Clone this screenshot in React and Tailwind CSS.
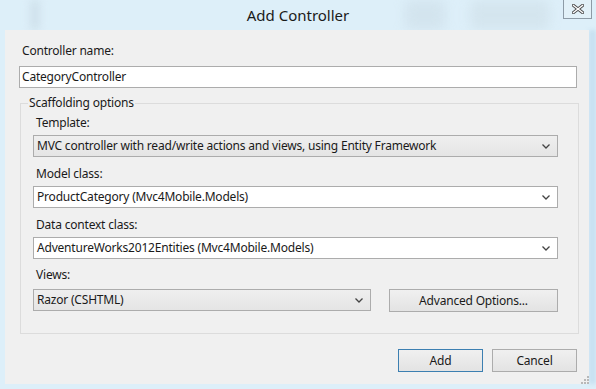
import React from 'react';

const font = { fontFamily: '"Noto Sans", "Liberation Sans", sans-serif' };

function Chevron() {
    return (
        <svg width="8" height="5" viewBox="0 0 8 5" className="shrink-0">
            <polyline points="0.5,0.5 4,4 7.5,0.5" fill="none" stroke="#444" strokeWidth="1.3" />
        </svg>
    );
}

function Select({ value, gray, className = '' }) {
    return (
        <div className={`h-[22px] flex items-center justify-between pl-[3px] pr-[7px] border border-[#acacac] ${gray ? 'bg-gradient-to-b from-[#efefef] to-[#e5e5e5]' : 'bg-white'} ${className}`}>
            <span className="text-[12px] leading-[16px] tracking-[-0.2px] text-[#1a1a1a] whitespace-nowrap">{value}</span>
            <Chevron />
        </div>
    );
}

function Label({ children }) {
    return <div className="h-[16px] text-[12px] leading-[16px] tracking-[-0.2px] text-[#1a1a1a] pl-[3px] whitespace-nowrap">{children}</div>;
}

function Button({ children, primary, className = '' }) {
    return (
        <div className={`h-[23px] flex items-center justify-center border bg-gradient-to-b from-[#f0f0f0] to-[#e3e3e3] text-[12px] tracking-[-0.2px] text-[#1a1a1a] ${primary ? 'border-[#3c7fb1]' : 'border-[#acacac]'} ${className}`}>
            {children}
        </div>
    );
}

export default function App() {
    return (
        <div className="w-[596px] h-[389px] relative overflow-hidden bg-[#ddeff9]" style={font}>
            {/* blurred background behind the glass frame */}
            <div className="absolute left-[30px] top-0 w-[10px] h-[30px] bg-[#c9dbe6] blur-[4px] opacity-70" />
            <div className="absolute left-[405px] top-0 w-[40px] h-[30px] bg-[#cfe0ea] blur-[6px] opacity-70" />
            <div className="absolute left-[470px] top-0 w-[80px] h-[30px] bg-[#cfdfe8] blur-[6px] opacity-60" />
            <div className="absolute right-0 top-[30px] w-[7px] h-[354px] bg-[#c6dff0] blur-[2px]" />

            <div className="relative h-[30px] flex items-center justify-center">
                <span className="text-[15px] text-[#1a1a1a]">Add Controller</span>
                <div className="absolute left-[563px] top-[-1px] w-[29px] h-[20px] border border-[#8d9ba6] bg-[#e6f1f7]/60 flex items-center justify-center">
                    <svg width="12" height="10" viewBox="0 0 12 10">
                        <path d="M1.5 1.5 L10.5 8.5 M10.5 1.5 L1.5 8.5" stroke="#4a4a4a" strokeWidth="3.2" strokeLinecap="square" />
                        <path d="M1.5 1.5 L10.5 8.5 M10.5 1.5 L1.5 8.5" stroke="#ffffff" strokeWidth="1.4" strokeLinecap="square" />
                    </svg>
                </div>
            </div>

            <div className="relative ml-[5px] w-[584px] h-[354px] bg-[#f0f0f0] pt-[13px] pl-[14px] pr-[12px]">
                <div className="h-[16px] text-[12px] leading-[16px] tracking-[-0.2px] text-[#1a1a1a] pl-[3px]">Controller name:</div>
                <div className="mt-[7px] h-[22px] bg-white border border-[#acacac] flex items-center pl-[2px] text-[12px] leading-[16px] tracking-[-0.2px] text-[#1a1a1a]">
                    CategoryController
                </div>

                <div className="relative mt-[15px] ml-[1px] w-[559px] border border-[#dcdcdc] pt-[11px] pl-[12px] pr-[20px] pb-[21px]">
                    <span className="absolute left-[7px] top-[-9px] px-[1px] bg-[#f0f0f0] text-[12px] leading-[16px] tracking-[-0.2px] text-[#1a1a1a]">Scaffolding options</span>

                    <Label>Template:</Label>
                    <Select className="mt-[4px]" gray value="MVC controller with read/write actions and views, using Entity Framework" />

                    <div className="mt-[9px]"><Label>Model class:</Label></div>
                    <Select className="mt-[4px]" value="ProductCategory (Mvc4Mobile.Models)" />

                    <div className="mt-[9px]"><Label>Data context class:</Label></div>
                    <Select className="mt-[4px]" value="AdventureWorks2012Entities (Mvc4Mobile.Models)" />

                    <div className="mt-[8px]"><Label>Views:</Label></div>
                    <div className="mt-[6px] flex items-start gap-[18px]">
                        <Select className="w-[338px]" gray value="Razor (CSHTML)" />
                        <Button className="w-[169px]">Advanced Options...</Button>
                    </div>
                </div>

                <div className="mt-[15px] flex justify-end gap-[9px]">
                    <Button primary className="w-[85px]">Add</Button>
                    <Button className="w-[85px]">Cancel</Button>
                </div>

                <svg className="absolute right-0 bottom-0" width="8" height="8" viewBox="0 0 8 8">
                    {[[6, 0], [6, 3], [3, 3], [6, 6], [3, 6], [0, 6]].map(([x, y]) => (
                        <rect key={`${x}-${y}`} x={x} y={y} width="2" height="2" fill="#b8b8b8" />
                    ))}
                </svg>
            </div>
        </div>
    );
}
